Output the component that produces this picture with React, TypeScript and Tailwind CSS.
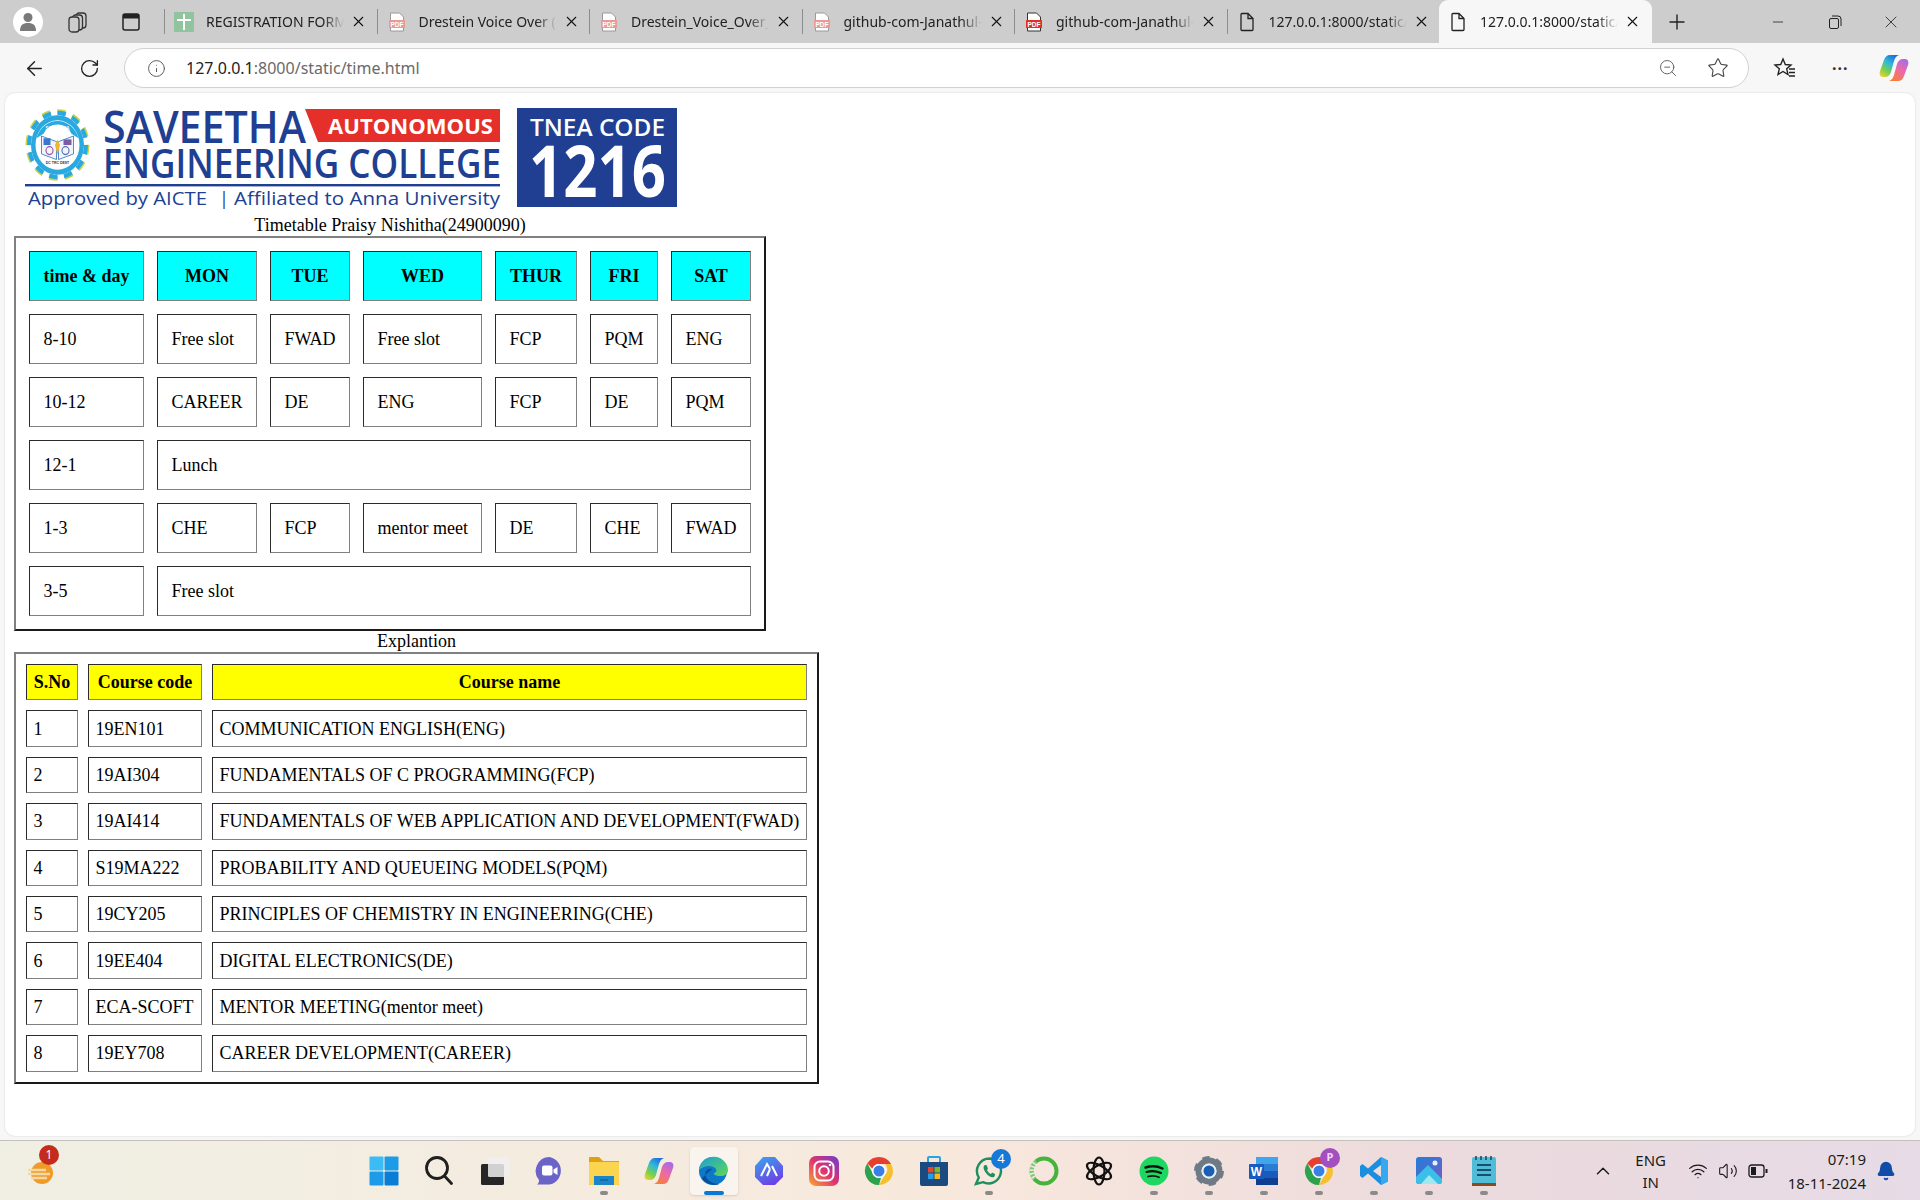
import React from "react";
import { ArrowLeft, RotateCw, Info, ZoomOut, Star, Plus, Minus, X, ChevronUp, Wifi, Volume2, Bell } from "lucide-react";

type Fav = "sheet" | "pdfFaded" | "pdf" | "doc";

const tabs: { title: string; fav: Fav; active?: boolean }[] = [
  { title: "REGISTRATION FORM", fav: "sheet" },
  { title: "Drestein Voice Over (1).pdf", fav: "pdfFaded" },
  { title: "Drestein_Voice_Over_(2).pdf", fav: "pdfFaded" },
  { title: "github-com-Janathul-website", fav: "pdfFaded" },
  { title: "github-com-Janathul-website", fav: "pdf" },
  { title: "127.0.0.1:8000/static/time.html", fav: "doc" },
  { title: "127.0.0.1:8000/static/time.html", fav: "doc", active: true },
];

const days = [
  { h: "MON", w: "w-[100px]" },
  { h: "TUE", w: "w-[80px]" },
  { h: "WED", w: "w-[119px]" },
  { h: "THUR", w: "w-[82px]" },
  { h: "FRI", w: "w-[68px]" },
  { h: "SAT", w: "w-[80px]" },
];

const slots = [
  { time: "8-10", cells: ["Free slot", "FWAD", "Free slot", "FCP", "PQM", "ENG"] },
  { time: "10-12", cells: ["CAREER", "DE", "ENG", "FCP", "DE", "PQM"] },
  { time: "12-1", cells: ["Lunch"] },
  { time: "1-3", cells: ["CHE", "FCP", "mentor meet", "DE", "CHE", "FWAD"] },
  { time: "3-5", cells: ["Free slot"] },
];

const courses = [
  ["1", "19EN101", "COMMUNICATION ENGLISH(ENG)"],
  ["2", "19AI304", "FUNDAMENTALS OF C PROGRAMMING(FCP)"],
  ["3", "19AI414", "FUNDAMENTALS OF WEB APPLICATION AND DEVELOPMENT(FWAD)"],
  ["4", "S19MA222", "PROBABILITY AND QUEUEING MODELS(PQM)"],
  ["5", "19CY205", "PRINCIPLES OF CHEMISTRY IN ENGINEERING(CHE)"],
  ["6", "19EE404", "DIGITAL ELECTRONICS(DE)"],
  ["7", "ECA-SCOFT", "MENTOR MEETING(mentor meet)"],
  ["8", "19EY708", "CAREER DEVELOPMENT(CAREER)"],
];

const cellBorder = "border border-t-[#2b2b2b] border-l-[#2b2b2b] border-b-[#808080] border-r-[#808080]";
const tableBorder = "border-2 border-t-[#808080] border-l-[#808080] border-b-[#1a1a1a] border-r-[#1a1a1a]";

const Favicon = ({ fav }: { fav: Fav }) => {
  if (fav === "sheet") {
    return (
      <svg width="20" height="20" viewBox="0 0 20 20">
        <rect width="20" height="20" rx="1" fill="#8fc49f" />
        <path d="M10 2v16M3 8h14" stroke="#fff" strokeWidth="2" />
      </svg>
    );
  }
  if (fav === "doc") {
    return (
      <svg width="20" height="20" viewBox="0 0 20 20" fill="none" stroke="#222" strokeWidth="1.3">
        <path d="M4 2.5a1 1 0 0 1 1-1h6l5 5v11a1 1 0 0 1-1 1H5a1 1 0 0 1-1-1zM11 1.5v5h5" />
      </svg>
    );
  }
  const faded = fav === "pdfFaded";
  return (
    <svg width="20" height="20" viewBox="0 0 20 20">
      <path d="M3.5 1h9l4 4v14h-13z" fill="#fff" stroke={faded ? "#9a9a9a" : "#333"} strokeWidth="1" />
      <rect x="2" y="8" width="16" height="8" fill={faded ? "#ea9a95" : "#e0302a"} />
      <text x="10" y="14.5" textAnchor="middle" fontSize="6.5" fontWeight="700" fill="#fff" fontFamily="Liberation Sans">PDF</text>
    </svg>
  );
};

const Tab = ({ title, fav, active }: { title: string; fav: Fav; active?: boolean }) => (
  <div className={active ? "flex h-[43px] w-[212.5px] items-center rounded-t-[9px] bg-[#f7f7f7] pl-[9px]" : "flex h-[25px] w-[212.5px] items-center border-l border-[#8d8d8d] pl-[9px]"}>
    <Favicon fav={fav} />
    <span className="ml-[12px] w-[138px] overflow-hidden whitespace-nowrap text-[14px] text-[#222] [mask-image:linear-gradient(90deg,#000_85%,transparent)]">{title}</span>
    <X size={17} strokeWidth={1.5} className="ml-[6px] text-[#111]" />
  </div>
);

const Logo = () => (
  <svg width="680" height="112" viewBox="14 103 680 112" className="block">
    {/* emblem */}
    <g transform="translate(57.5 145) scale(1 1.12)">
      <circle r="29.500" fill="none" stroke="#c9d24a" strokeWidth="5" strokeDasharray="8.400 7" />
      <circle r="28.500" fill="none" stroke="#29a9e0" strokeWidth="4" strokeDasharray="8.400 6.500" />
      <circle r="26.500" fill="#29a9e0" />
      <circle r="22" fill="#fff" />
      <path d="M-21 -6A22 22 0 0 1 21 -6L14 -10A16 16 0 0 0 -14 -10z" fill="#29a9e0" />
      <text y="-13.500" textAnchor="middle" fontSize="4.500" fontWeight="700" fill="#fff" fontFamily="Liberation Sans">SAVEETHA</text>
      <path d="M-16 -8l15 5v16l-15-5zM16 -8l-15 5v16l15-5z" fill="#eef6fb" stroke="#3a76b8" strokeWidth="0.800" />
      <rect x="-14" y="-6" width="7" height="6" fill="#3a76d0" />
      <rect x="6" y="-5" width="8" height="5" fill="#7d5aa8" />
      <circle cx="-8" cy="5" r="3.500" fill="none" stroke="#a04ea0" strokeWidth="1.100" />
      <circle cx="8" cy="5" r="3.500" fill="none" stroke="#5a6ab8" strokeWidth="1.100" />
      <path d="M0 -5l2.500 5-2.500 9-2.500-9z" fill="#f2b431" />
      <text y="17" textAnchor="middle" fontSize="3.500" fontWeight="700" fill="#333" fontFamily="Liberation Sans">DC TRC DEST</text>
    </g>
    {/* name */}
    <g fontFamily="Open Sans" fill="#203f92">
      <text x="103" y="143" fontSize="46" fontWeight="600" textLength="203" lengthAdjust="spacingAndGlyphs">SAVEETHA</text>
      <text x="103" y="178" fontSize="39" fontWeight="600" textLength="398" lengthAdjust="spacingAndGlyphs">ENGINEERING COLLEGE</text>
      <text x="28" y="205" fontSize="18" textLength="179" lengthAdjust="spacingAndGlyphs">Approved by AICTE</text>
      <text x="219" y="205" fontSize="18">|</text>
      <text x="234" y="205" fontSize="18" textLength="266" lengthAdjust="spacingAndGlyphs">Affiliated to Anna University</text>
    </g>
    <polygon points="305,109 500,109 500,142 318,142" fill="#e42f2b" />
    <text x="328" y="134" fontSize="22" fontWeight="700" fontFamily="Open Sans" fill="#fff" textLength="165" lengthAdjust="spacingAndGlyphs">AUTONOMOUS</text>
    <rect x="25" y="184" width="475" height="2.400" fill="#203f92" />
    {/* code box */}
    <rect x="517" y="108" width="160" height="99" fill="#203f92" />
    <text x="530" y="136" fontSize="24" fontWeight="600" fontFamily="Open Sans" fill="#fff" textLength="135" lengthAdjust="spacingAndGlyphs">TNEA CODE</text>
    <text x="529" y="197" fontSize="71" fontWeight="700" fontFamily="Open Sans" fill="#fff" textLength="137" lengthAdjust="spacingAndGlyphs">1216</text>
  </svg>
);

const Timetable = () => (
  <table className={`table-fixed border-separate border-spacing-[13px] w-[752px] ${tableBorder}`}>
    <caption className="pb-[1px] leading-[20px]">Timetable Praisy Nishitha(24900090)</caption>
    <thead>
      <tr>
        <th className={`h-[50px] w-[115px] bg-[#00ffff] pb-[1px] text-center font-bold ${cellBorder}`}>time &amp; day</th>
        {days.map((d) => (
          <th key={d.h} className={`${d.w} bg-[#00ffff] pb-[1px] text-center font-bold ${cellBorder}`}>{d.h}</th>
        ))}
      </tr>
    </thead>
    <tbody>
      {slots.map((s) => (
        <tr key={s.time}>
          <td className={`h-[50px] px-[13.5px] pb-[1px] ${cellBorder}`}>{s.time}</td>
          {s.cells.map((c, i) => (
            <td key={i} colSpan={s.cells.length === 1 ? 6 : 1} className={`whitespace-nowrap px-[13.5px] pb-[1px] ${cellBorder}`}>{c}</td>
          ))}
        </tr>
      ))}
    </tbody>
  </table>
);

const CourseTable = () => (
  <table className={`table-fixed border-separate border-spacing-[10px] w-[805px] ${tableBorder}`}>
    <caption className="pb-[1px] leading-[20px]">Explantion</caption>
    <thead>
      <tr>
        <th className={`h-[36.4px] w-[52px] bg-[#ffff00] text-center font-bold ${cellBorder}`}>S.No</th>
        <th className={`w-[114px] bg-[#ffff00] text-center font-bold ${cellBorder}`}>Course code</th>
        <th className={`bg-[#ffff00] text-center font-bold ${cellBorder}`}>Course name</th>
      </tr>
    </thead>
    <tbody>
      {courses.map((c) => (
        <tr key={c[0]}>
          <td className={`h-[36.4px] px-[6.5px] ${cellBorder}`}>{c[0]}</td>
          <td className={`whitespace-nowrap px-[6.5px] ${cellBorder}`}>{c[1]}</td>
          <td className={`whitespace-nowrap px-[6.5px] ${cellBorder}`}>{c[2]}</td>
        </tr>
      ))}
    </tbody>
  </table>
);

const Copilot = ({ size, id }: { size: number; id: string }) => (
  <svg width={size} height={size} viewBox="0 0 30 30">
    <defs>
      <linearGradient id={`${id}a`} x1="0.7" y1="0" x2="0.1" y2="1">
        <stop offset="0" stopColor="#1f6fe0" />
        <stop offset="0.35" stopColor="#2fb8d8" />
        <stop offset="0.7" stopColor="#7cd04a" />
        <stop offset="1" stopColor="#f5d030" />
      </linearGradient>
      <linearGradient id={`${id}b`} x1="0.8" y1="0" x2="0.2" y2="1">
        <stop offset="0" stopColor="#a86be8" />
        <stop offset="0.5" stopColor="#f06aa0" />
        <stop offset="1" stopColor="#f5822e" />
      </linearGradient>
    </defs>
    <path d="M11 2h9c-3 1-4 3-5 6l-3 11c-1 3-3 5-6 5H4C1 24 0 21 1 18l4-11c1-3 3-5 6-5z" fill={`url(#${id}a)`} />
    <path d="M19 28h-9c3-1 4-3 5-6l3-11c1-3 3-5 6-5h2c3 0 4 3 3 6l-4 11c-1 3-3 5-6 5z" fill={`url(#${id}b)`} />
  </svg>
);

const ChromeLogo = () => (
  <svg width="30" height="30" viewBox="0 0 30 30">
    <path d="M15 1a14 14 0 0 1 12.100 7H15a7 7 0 0 0-6.600 4.700L3.300 7.300A14 14 0 0 1 15 1z" fill="#e5402f" />
    <path d="M27.100 8A14 14 0 0 1 15 29l6.100-10.500A7 7 0 0 0 21 8z" fill="#f6c02c" />
    <path d="M15 29A14 14 0 0 1 3.300 7.300l5.500 10.200A7 7 0 0 0 17 21.700z" fill="#2ca24c" />
    <circle cx="15" cy="15" r="7" fill="#fff" />
    <circle cx="15" cy="15" r="5.500" fill="#3a7fe8" />
  </svg>
);

// taskbar icons, left to right
const taskIcons: { key: string; dot?: boolean; active?: boolean; badge?: React.ReactNode; el: React.ReactNode }[] = [
  {
    key: "start",
    el: (
      <svg width="30" height="30" viewBox="0 0 30 30">
        <rect x="0.500" y="0.500" width="14" height="14" rx="1" fill="#3cbcf4" />
        <rect x="15.500" y="0.500" width="14" height="14" rx="1" fill="#1c9ce8" />
        <rect x="0.500" y="15.500" width="14" height="14" rx="1" fill="#1c9ce8" />
        <rect x="15.500" y="15.500" width="14" height="14" rx="1" fill="#0a7dd6" />
      </svg>
    ),
  },
  {
    key: "search",
    el: (
      <svg width="30" height="30" viewBox="0 0 30 30" fill="none" stroke="#1f1f1f" strokeWidth="2.800" strokeLinecap="round">
        <circle cx="13" cy="12" r="10.500" />
        <path d="M20.500 20l7 7.500" />
      </svg>
    ),
  },
  {
    key: "view",
    el: (
      <svg width="30" height="30" viewBox="0 0 30 30">
        <rect x="2" y="8" width="23" height="21" rx="1.500" fill="#262626" />
        <rect x="9" y="1" width="22" height="20" rx="1.500" fill="#f0f0f0" fillOpacity="0.850" />
      </svg>
    ),
  },
  {
    key: "meet",
    el: (
      <svg width="30" height="30" viewBox="0 0 30 30">
        <path d="M15.500 1a14 14 0 0 1 0 27.500H3c1.500-1 2-2.500 2-4.500A14 14 0 0 1 15.500 1z" fill="#6b64c8" />
        <rect x="8" y="9.500" width="10.500" height="10" rx="2" fill="#fff" />
        <path d="M19.500 13.500l4-2.500v8l-4-2.500z" fill="#fff" />
      </svg>
    ),
  },
  {
    key: "files",
    dot: true,
    el: (
      <svg width="30" height="30" viewBox="0 0 30 30">
        <path d="M0 2a1 1 0 0 1 1-1h9l4 4h16v24H0z" fill="#dfa012" />
        <rect x="0" y="6" width="30" height="23" rx="1" fill="#fbd54f" />
        <path d="M5 20h20v9H5z" fill="#1a86c8" />
        <path d="M11 24h8" stroke="#0d5f96" strokeWidth="1.200" />
      </svg>
    ),
  },
  { key: "copilot", el: <Copilot size={30} id="cptask" /> },
  {
    key: "edge",
    active: true,
    el: (
      <svg width="32" height="32" viewBox="0 0 32 32">
        <defs>
          <linearGradient id="edgea" x1="0" y1="0" x2="1" y2="1">
            <stop offset="0" stopColor="#1a9fd8" />
            <stop offset="1" stopColor="#60d850" />
          </linearGradient>
        </defs>
        <circle cx="15" cy="16" r="14" fill="#0d78c8" />
        <path d="M1 15C3 4 12 1 18 2c7 1 12 7 12 13 0 4-3 6-8 6-4 0-6-1-7-3 3 0 4-2 3-4-2-3-8-4-12-2-2 1-4 2-5 3z" fill="url(#edgea)" />
        <path d="M14 14c-5-1-8 3-6 8 2 4 7 7 13 7-4 2-13 1-17-6" fill="#0a4d96" />
        <path d="M14 17c0 5 4 8 9 8" fill="none" stroke="#0d78c8" strokeWidth="3" />
      </svg>
    ),
  },
  {
    key: "arc",
    el: (
      <svg width="30" height="30" viewBox="0 0 30 30">
        <defs>
          <linearGradient id="arcg" x1="0" y1="0" x2="0.500" y2="1">
            <stop offset="0" stopColor="#3aa6ec" />
            <stop offset="1" stopColor="#6a44e8" />
          </linearGradient>
        </defs>
        <path d="M9 1h12l8 9v11l-8 8H9l-8-8V10z" fill="url(#arcg)" />
        <path d="M7 20l6-12 3 5M13 20l3-7M23 20l-5-10" fill="none" stroke="#fff" strokeWidth="2" />
      </svg>
    ),
  },
  {
    key: "insta",
    el: (
      <svg width="30" height="30" viewBox="0 0 30 30">
        <defs>
          <linearGradient id="instag" x1="0" y1="1" x2="1" y2="0">
            <stop offset="0" stopColor="#f9a832" />
            <stop offset="0.500" stopColor="#e0336e" />
            <stop offset="1" stopColor="#6a3cd0" />
          </linearGradient>
        </defs>
        <rect width="30" height="30" rx="7" fill="url(#instag)" />
        <rect x="5.500" y="5.500" width="19" height="19" rx="5.500" fill="none" stroke="#fff" strokeWidth="2" />
        <circle cx="15" cy="15" r="4.800" fill="none" stroke="#fff" strokeWidth="2" />
        <circle cx="21" cy="9" r="1.300" fill="#fff" />
      </svg>
    ),
  },
  { key: "chrome", el: <ChromeLogo /> },
  {
    key: "store",
    el: (
      <svg width="30" height="32" viewBox="0 0 30 32">
        <path d="M9 7V3a1 1 0 0 1 1-1h10a1 1 0 0 1 1 1v4" fill="none" stroke="#2aa4e0" strokeWidth="2" />
        <path d="M1 7h28v22a2 2 0 0 1-2 2H3a2 2 0 0 1-2-2z" fill="#1a4a80" />
        <rect x="9" y="12" width="5.500" height="5.500" fill="#e8452c" />
        <rect x="15.500" y="12" width="5.500" height="5.500" fill="#7cb62a" />
        <rect x="9" y="18.500" width="5.500" height="5.500" fill="#1fa0e8" />
        <rect x="15.500" y="18.500" width="5.500" height="5.500" fill="#f6b91c" />
      </svg>
    ),
  },
  {
    key: "whatsapp",
    dot: true,
    badge: <span className="absolute left-[30px] top-[2px] flex h-[20px] w-[20px] items-center justify-center rounded-full bg-[#1778d8] text-[13px] text-white">4</span>,
    el: (
      <svg width="30" height="30" viewBox="0 0 30 30">
        <path d="M15.500 2.500a12.500 12.500 0 0 0-10.700 19L2 28l7-1.800A12.500 12.500 0 1 0 15.500 2.500z" fill="none" stroke="#1f8f5f" strokeWidth="2.400" />
        <path d="M11 9c-2 1-2 4 1 8s6 5 8 4c1-1 1-2 1-3l-3-1.500-1 1.500c-1 0-3-2-4-4l1-1.500L12.500 9z" fill="#1f8f5f" />
      </svg>
    ),
  },
  {
    key: "ring",
    el: (
      <svg width="30" height="30" viewBox="0 0 30 30" fill="none">
        <circle cx="15" cy="15" r="12.500" stroke="#46b43c" strokeWidth="4" />
        <path d="M7 5.500a12.500 12.500 0 0 0-1.500 17" stroke="#f5ebe2" strokeWidth="4.500" />
        <path d="M7 5.500a12.500 12.500 0 0 0-1.500 17" stroke="#7cc874" strokeWidth="4" strokeDasharray="2 1.500" />
      </svg>
    ),
  },
  {
    key: "gpt",
    el: (
      <svg width="30" height="30" viewBox="0 0 30 30" fill="none" stroke="#111" strokeWidth="2.200">
        <ellipse cx="15" cy="15" rx="5.500" ry="13.500" />
        <ellipse cx="15" cy="15" rx="5.500" ry="13.500" transform="rotate(60 15 15)" />
        <ellipse cx="15" cy="15" rx="5.500" ry="13.500" transform="rotate(120 15 15)" />
      </svg>
    ),
  },
  {
    key: "spotify",
    dot: true,
    el: (
      <svg width="30" height="30" viewBox="0 0 30 30" fill="none" stroke="#111" strokeLinecap="round">
        <circle cx="15" cy="15" r="14.500" fill="#1ed760" stroke="none" />
        <path d="M6.500 11.500c6-2 12-1.500 17 1" strokeWidth="2.400" />
        <path d="M7.500 16c5-1.500 10-1 14.500 1" strokeWidth="2.100" />
        <path d="M9 20.500c4-1 8-.7 11 .8" strokeWidth="1.800" />
      </svg>
    ),
  },
  {
    key: "settings",
    dot: true,
    el: (
      <svg width="30" height="30" viewBox="0 0 30 30">
        <circle cx="15" cy="15" r="10.500" fill="none" stroke="#6e7a85" strokeWidth="6" />
        <circle cx="15" cy="15" r="13" fill="none" stroke="#6e7a85" strokeWidth="4" strokeDasharray="7 6.600" />
        <circle cx="15" cy="15" r="7.500" fill="#e8eef4" />
        <circle cx="15" cy="15" r="5.500" fill="#1a5fb4" />
      </svg>
    ),
  },
  {
    key: "word",
    dot: true,
    el: (
      <svg width="30" height="30" viewBox="0 0 30 30">
        <rect x="7" y="1" width="22" height="28" rx="2" fill="#2b7cd3" />
        <rect x="7" y="1" width="22" height="7" fill="#41a5ee" />
        <rect x="7" y="15" width="22" height="7" fill="#185abd" />
        <rect x="7" y="22" width="22" height="7" fill="#103f91" />
        <rect x="0" y="8" width="15" height="15" rx="1" fill="#185abd" />
        <text x="7.500" y="20" textAnchor="middle" fontSize="12" fontWeight="700" fill="#fff" fontFamily="Liberation Sans">W</text>
      </svg>
    ),
  },
  {
    key: "chrome2",
    dot: true,
    badge: <span className="absolute left-[29px] top-[1px] flex h-[20px] w-[20px] items-center justify-center rounded-full bg-[#a24fc0] text-[11px] font-bold text-[#f0d8f8]">P</span>,
    el: <ChromeLogo />,
  },
  {
    key: "vscode",
    dot: true,
    el: (
      <svg width="30" height="30" viewBox="0 0 30 30">
        <path fillRule="evenodd" d="M22 1l7 3.500v21L22 29 9 17.500 3.500 22 1 20v-10l2.500-2L9 12.500zM22 9l-8 6 8 6z" fill="#1a8fe0" />
        <path d="M22 1l7 3.500v21L22 29z" fill="#35a8f0" />
      </svg>
    ),
  },
  {
    key: "photos",
    dot: true,
    el: (
      <svg width="30" height="30" viewBox="0 0 30 30">
        <defs>
          <linearGradient id="phg" x1="0" y1="0" x2="1" y2="1">
            <stop offset="0" stopColor="#1f7fd8" />
            <stop offset="1" stopColor="#7a5ac8" />
          </linearGradient>
        </defs>
        <rect x="2" y="1" width="26" height="27" rx="3" fill="url(#phg)" />
        <circle cx="21" cy="7" r="2.500" fill="#dff2ff" />
        <path d="M2 25v-4L14 9l14 14v2a3 3 0 0 1-3 3H5a3 3 0 0 1-3-3z" fill="#3ac0e8" />
        <path d="M7 28l8-9 9 9z" fill="#9fe8f0" />
      </svg>
    ),
  },
  {
    key: "notepad",
    dot: true,
    el: (
      <svg width="30" height="32" viewBox="0 0 30 32">
        <rect x="3" y="2" width="24" height="27" rx="2" fill="#4fbcd8" />
        <rect x="3" y="28" width="24" height="3" fill="#8a4a1a" />
        <path d="M8 10h14M8 15h14M8 20h14" stroke="#17506e" strokeWidth="2" />
        <path d="M7 1v4M12 1v4M17 1v4M22 1v4" stroke="#17506e" strokeWidth="1.600" />
      </svg>
    ),
  },
];

export default function App() {
  return (
    <div className="flex h-[1200px] w-[1920px] flex-col overflow-hidden bg-[#f7f7f7] font-['Noto_Sans',sans-serif]">
      {/* tab strip */}
      <div className="flex h-[43px] items-center bg-[#cdcdcd]">
        <div className="ml-[13px] flex h-[30px] w-[30px] items-center justify-center rounded-full bg-white">
          <svg width="16" height="20" viewBox="0 0 16 20" fill="#7a7a7a">
            <circle cx="8" cy="5.500" r="4.500" />
            <path d="M0 19c0-6 3-8 8-8s8 2 8 8z" />
          </svg>
        </div>
        <svg width="22" height="22" viewBox="0 0 22 22" fill="none" stroke="#333" strokeWidth="1.300" className="ml-[24px]">
          <rect x="9" y="2" width="10" height="15" rx="3" />
          <rect x="5.500" y="4" width="10" height="15" rx="3" fill="#cdcdcd" />
          <rect x="2" y="6" width="10" height="15" rx="3" fill="#cdcdcd" />
        </svg>
        <svg width="20" height="20" viewBox="0 0 20 20" fill="none" className="ml-[32px]">
          <rect x="2" y="2" width="16" height="16" rx="2" stroke="#222" strokeWidth="1.500" />
          <rect x="2" y="2" width="16" height="4.500" fill="#222" />
        </svg>
        <div className="ml-[23px] flex items-center">
          {tabs.map((t, i) => (
            <Tab key={i} title={t.title} fav={t.fav} active={t.active} />
          ))}
        </div>
        <Plus size={24} strokeWidth={1.4} className="ml-[13px] text-[#222]" />
        <div className="ml-auto flex items-center text-[#222]">
          <Minus size={16} strokeWidth={1.2} />
          <svg width="14" height="14" viewBox="0 0 14 14" fill="none" stroke="#222" strokeWidth="1" className="ml-[42px]">
            <rect x="1.500" y="3.500" width="9" height="10" rx="1.500" />
            <path d="M4 1h6a3 3 0 0 1 3 3v7" />
          </svg>
          <X size={20} strokeWidth={1} className="ml-[39px] mr-[19px]" />
        </div>
      </div>

      {/* address bar */}
      <div className="flex h-[50px] items-center">
        <ArrowLeft size={23} strokeWidth={1.5} className="ml-[23px] text-[#222]" />
        <RotateCw size={21} strokeWidth={1.5} className="ml-[33px] text-[#222]" />
        <div className="ml-[24px] flex h-[40px] w-[1625px] items-center rounded-full border border-[#d2d2d2] bg-white">
          <Info size={19} strokeWidth={1.2} className="ml-[22px] text-[#555]" />
          <span className="ml-[20px] text-[16px] text-[#222]">
            127.0.0.1<span className="text-[#6a6a6a]">:8000/static/time.html</span>
          </span>
          <ZoomOut size={20} strokeWidth={1.2} className="ml-auto text-[#666]" />
          <Star size={22} strokeWidth={1.2} className="ml-[29px] mr-[19px] text-[#444]" />
        </div>
        <svg width="24" height="24" viewBox="0 0 24 24" fill="none" stroke="#222" strokeWidth="1.400" className="ml-[24px]">
          <path d="M10 3l2.300 5.500 5.700.5-4.300 3.800 1.300 5.700-5-3-5 3 1.300-5.700L2 9l5.700-.5z" />
          <path d="M16 13h6M16 16.500h6M16 20h6" />
        </svg>
        <span className="ml-[35px] text-[16px] font-bold leading-none tracking-[1px] text-[#333]">···</span>
        <span className="ml-[30px] flex">
          <Copilot size={30} id="cpbar" />
        </span>
      </div>

      {/* page */}
      <div className="mx-[5px] mb-[4px] flex-1 rounded-[10px] bg-white pl-[9px] pt-[10px] font-['Liberation_Serif','Times_New_Roman',serif] text-[18px] leading-[20px] text-black shadow-[0_0_2px_#cfcfcf]">
        <Logo />
        <Timetable />
        <CourseTable />
      </div>

      {/* taskbar */}
      <div className="relative flex h-[60px] items-center border-t border-[#c4c1bd] bg-[linear-gradient(90deg,#f0efe4_0%,#f5ebdf_30%,#f8e8dc_50%,#ecdadd_75%,#e6dbe6_100%)]">
        <div className="relative ml-[26px] h-[30px] w-[30px]">
          <svg width="30" height="30" viewBox="0 0 30 30">
            <circle cx="16" cy="17" r="11" fill="#f09a28" />
            <path d="M2 14h18M2 18h22M5 22h16" stroke="#f3d9a6" strokeWidth="2.500" />
          </svg>
          <span className="absolute left-[13px] top-[-11px] flex h-[20px] w-[20px] items-center justify-center rounded-full bg-[#c42b1c] text-[12px] text-white">1</span>
        </div>
        <div className="ml-[300px] flex">
          {taskIcons.map((t) => (
            <div key={t.key} className={t.active ? "relative mx-[3.500px] flex h-[48px] w-[48px] items-center justify-center rounded-[4px] bg-[#faf4ee] shadow-sm" : "relative flex h-[48px] w-[55px] items-center justify-center"}>
              {t.el}
              {t.badge}
              {t.dot && <span className="absolute bottom-[0px] left-1/2 h-[4px] w-[8px] -translate-x-1/2 rounded-full bg-[#8a8a8a]" />}
              {t.active && <span className="absolute bottom-[0px] left-1/2 h-[4px] w-[20px] -translate-x-1/2 rounded-full bg-[#0a78d4]" />}
            </div>
          ))}
        </div>
        <div className="ml-auto flex items-center text-[#1b1b1b]">
          <ChevronUp size={22} strokeWidth={1.6} />
          <div className="ml-[19px] flex w-[36px] flex-col items-center text-[15px] leading-[22px]">
            <span>ENG</span>
            <span>IN</span>
          </div>
          <Wifi size={20} strokeWidth={1.5} className="ml-[19px]" />
          <Volume2 size={20} strokeWidth={1.3} className="ml-[10px]" />
          <svg width="20" height="14" viewBox="0 0 20 14" fill="none" stroke="#1b1b1b" strokeWidth="1.300" className="ml-[10px]">
            <rect x="1" y="1" width="15" height="12" rx="2.500" />
            <rect x="3" y="3" width="5" height="8" fill="#1b1b1b" stroke="none" />
            <path d="M18.500 5v4" strokeWidth="2" />
          </svg>
          <div className="ml-[20px] flex flex-col items-end text-[15px] leading-[24px]">
            <span>07:19</span>
            <span>18-11-2024</span>
          </div>
          <Bell size={20} fill="#0f4ea8" stroke="#0f4ea8" className="ml-[10px] mr-[24px]" />
        </div>
      </div>
    </div>
  );
}
